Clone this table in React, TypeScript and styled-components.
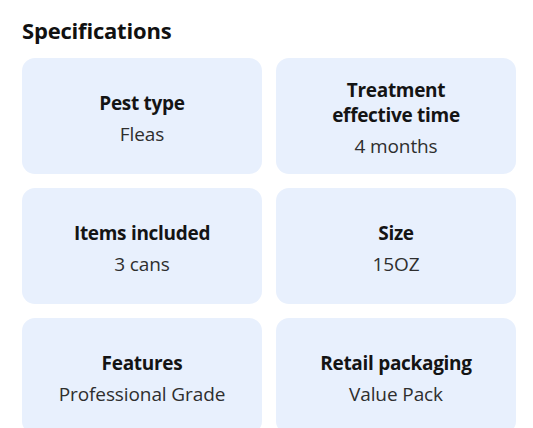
import React from "react";
import styled, { createGlobalStyle } from "styled-components";

const GlobalStyle = createGlobalStyle`
  html, body {
    margin: 0;
    padding: 0;
    background: #ffffff;
  }
  body {
    font-family: "Open Sans", "Noto Sans", "Liberation Sans", sans-serif;
    -webkit-font-smoothing: antialiased;
  }
`;

const Page = styled.section`
  padding: 16px 17px 0 22px;
  width: 533px;
  box-sizing: border-box;
`;

const Title = styled.h2`
  margin: 0 0 14px 0;
  font-size: 22px;
  line-height: 28px;
  font-weight: 700;
  color: #111111;
  letter-spacing: -0.2px;
`;

const Grid = styled.div`
  display: grid;
  grid-template-columns: 240px 240px;
  grid-auto-rows: 116px;
  column-gap: 14px;
  row-gap: 14px;
`;

const Card = styled.div`
  background: #e8f0fd;
  border-radius: 13px;
  display: flex;
  flex-direction: column;
  align-items: center;
  justify-content: center;
  gap: 6px;
  padding: 5px 12px 0;
  box-sizing: border-box;
  text-align: center;
`;

const Label = styled.div`
  font-size: 19px;
  line-height: 25px;
  font-weight: 700;
  color: #141414;
  letter-spacing: -0.3px;
`;

const Value = styled.div`
  font-size: 19px;
  line-height: 25px;
  font-weight: 400;
  color: #2e2e2e;
  letter-spacing: -0.1px;
`;

const specs: { label: string; value: string }[] = [
  { label: "Pest type", value: "Fleas" },
  { label: "Treatment effective time", value: "4 months" },
  { label: "Items included", value: "3 cans" },
  { label: "Size", value: "15OZ" },
  { label: "Features", value: "Professional Grade" },
  { label: "Retail packaging", value: "Value Pack" },
];

export default function App() {
  return (
    <>
      <GlobalStyle />
      <Page>
        <Title>Specifications</Title>
        <Grid>
          {specs.map((s) => (
            <Card key={s.label}>
              <Label>
                {s.label === "Treatment effective time" ? (
                  <>
                    Treatment
                    <br />
                    effective time
                  </>
                ) : (
                  s.label
                )}
              </Label>
              <Value>{s.value}</Value>
            </Card>
          ))}
        </Grid>
      </Page>
    </>
  );
}
